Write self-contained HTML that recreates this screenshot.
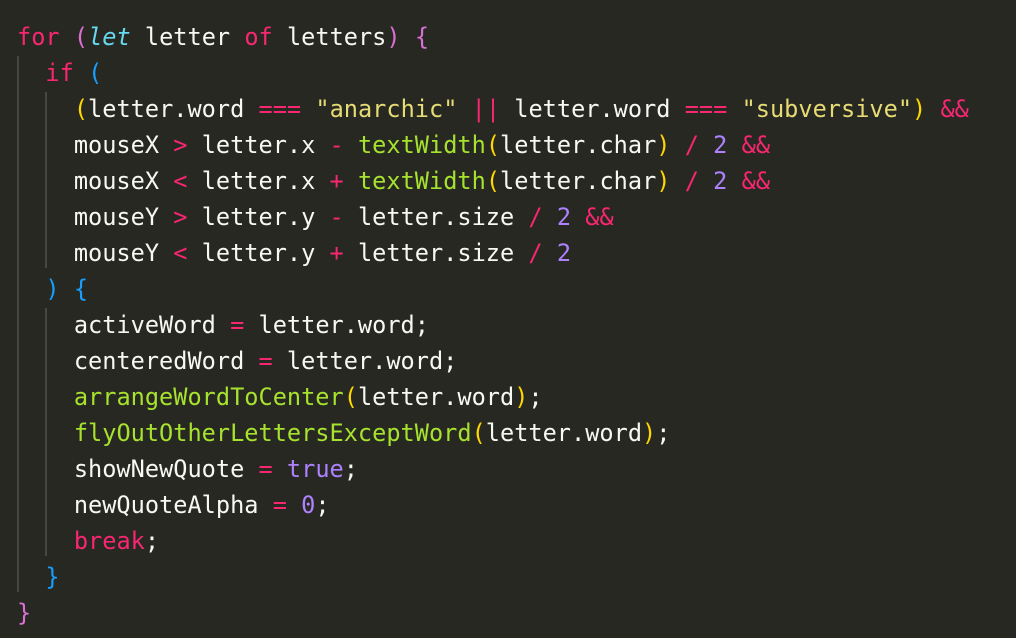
<!DOCTYPE html>
<html><head><meta charset="utf-8"><style>
html,body{margin:0;padding:0;background:#272822;}
body{width:1016px;height:638px;overflow:hidden;position:relative;}
pre{margin:0;position:absolute;left:17px;top:19px;font-family:"DejaVu Sans Mono","Liberation Mono",monospace;font-size:23.6px;line-height:36px;color:#f8f8f2;}
.k{color:#f92672}.s{color:#66d9ef;font-style:italic}.st{color:#e6db74}.f{color:#a6e22e}.n{color:#ae81ff}
.p1{color:#da70d6}.p2{color:#179fff}.p3{color:#ffd700}
.g{position:absolute;width:2px;background:#464741;}
</style></head><body>
<div class="g" style="left:17px;top:56px;height:536px"></div>
<div class="g" style="left:45px;top:92px;height:176px"></div>
<div class="g" style="left:45px;top:308px;height:248px"></div>
<pre><span class="k">for</span> <span class="p1">(</span><span class="s">let</span> letter <span class="k">of</span> letters<span class="p1">)</span> <span class="p1">{</span>
  <span class="k">if</span> <span class="p2">(</span>
    <span class="p3">(</span>letter.word <span class="k">===</span> <span class="st">"anarchic"</span> <span class="k">||</span> letter.word <span class="k">===</span> <span class="st">"subversive"</span><span class="p3">)</span> <span class="k">&amp;&amp;</span>
    mouseX <span class="k">&gt;</span> letter.x <span class="k">-</span> <span class="f">textWidth</span><span class="p3">(</span>letter.char<span class="p3">)</span> <span class="k">/</span> <span class="n">2</span> <span class="k">&amp;&amp;</span>
    mouseX <span class="k">&lt;</span> letter.x <span class="k">+</span> <span class="f">textWidth</span><span class="p3">(</span>letter.char<span class="p3">)</span> <span class="k">/</span> <span class="n">2</span> <span class="k">&amp;&amp;</span>
    mouseY <span class="k">&gt;</span> letter.y <span class="k">-</span> letter.size <span class="k">/</span> <span class="n">2</span> <span class="k">&amp;&amp;</span>
    mouseY <span class="k">&lt;</span> letter.y <span class="k">+</span> letter.size <span class="k">/</span> <span class="n">2</span>
  <span class="p2">)</span> <span class="p2">{</span>
    activeWord <span class="k">=</span> letter.word;
    centeredWord <span class="k">=</span> letter.word;
    <span class="f">arrangeWordToCenter</span><span class="p3">(</span>letter.word<span class="p3">)</span>;
    <span class="f">flyOutOtherLettersExceptWord</span><span class="p3">(</span>letter.word<span class="p3">)</span>;
    showNewQuote <span class="k">=</span> <span class="n">true</span>;
    newQuoteAlpha <span class="k">=</span> <span class="n">0</span>;
    <span class="k">break</span>;
  <span class="p2">}</span>
<span class="p1">}</span></pre>
</body></html>
